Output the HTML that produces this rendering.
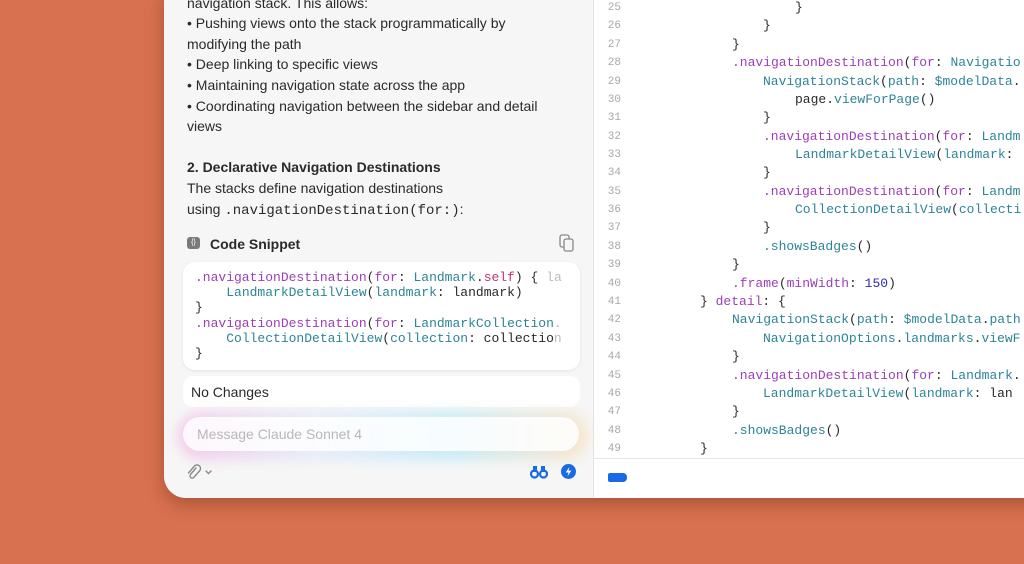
<!DOCTYPE html>
<html><head><meta charset="utf-8"><style>
*{margin:0;padding:0;box-sizing:border-box}
body{width:1024px;height:564px;overflow:hidden;background:#d8714f;font-family:"Liberation Sans",sans-serif;position:relative}
.win{position:absolute;left:164px;top:-20px;width:900px;height:518px;border-radius:22px;background:#fff;overflow:hidden;box-shadow:0 6px 18px rgba(80,30,10,.35)}
.left{position:absolute;left:0;top:0;width:430px;height:100%;background:#f6f6f6;border-right:1px solid #e4e4e4}
.t{position:absolute;left:23px;font-size:14px;color:#2a2a2a;white-space:nowrap}
.mono{font-family:"Liberation Mono",monospace}
.pu{color:#9b3fb8}.te{color:#2c8596}.pk{color:#c2366f}.nv{color:#2d2ab0}.gy{color:#bbb}
.r{position:absolute;left:430px;top:0;right:0;height:100%}
.ln{position:absolute;left:12px;width:24px;text-align:right;font-family:"Liberation Mono",monospace;font-size:11px;color:#a8a8a8}
.cl{position:absolute;font-family:"Liberation Mono",monospace;font-size:13px;color:#2a2a2a;white-space:pre}
</style></head><body>
<div class="win">
 <div class="left">
  <div class="t" style="top:15px">navigation stack. This allows:</div>
  <div class="t" style="top:35px">• Pushing views onto the stack programmatically by</div>
  <div class="t" style="top:56px">modifying the path</div>
  <div class="t" style="top:76px">• Deep linking to specific views</div>
  <div class="t" style="top:97px">• Maintaining navigation state across the app</div>
  <div class="t" style="top:118px">• Coordinating navigation between the sidebar and detail</div>
  <div class="t" style="top:138px">views</div>
  <div class="t" style="top:179px;font-weight:bold">2. Declarative Navigation Destinations</div>
  <div class="t" style="top:200px">The stacks define navigation destinations</div>
  <div class="t" style="top:221px">using <span class="mono">.navigationDestination(for:)</span>:</div>
  <div style="position:absolute;left:23px;top:257px;width:13px;height:12px;background:#7a7a7a;border-radius:3px;color:#fff;font-size:7px;text-align:center;line-height:12px">{}</div>
  <div class="t" style="top:256px;left:46px;font-weight:bold;font-size:14px">Code Snippet</div>
  <svg style="position:absolute;left:395px;top:254px" width="16" height="18" viewBox="0 0 16 18" fill="none" stroke="#888" stroke-width="1.3"><rect x="1" y="1" width="9" height="12" rx="2"/><rect x="5" y="5" width="9" height="12" rx="2" fill="#f6f6f6"/></svg>
  <div style="position:absolute;left:19px;top:282px;width:397px;height:108px;background:#fff;border-radius:12px;box-shadow:0 1px 3px rgba(0,0,0,.08)"></div>
  <div class="cl" style="left:31px;top:290px;line-height:15.2px;font-size:13px;width:380px;overflow:hidden"><span class="pu">.navigationDestination</span>(<span class="pu">for</span>: <span class="te">Landmark</span>.<span class="pk">self</span>) { <span class="gy">la</span>
    <span class="te">LandmarkDetailView</span>(<span class="te">landmark</span>: landmark)
}
<span class="pu">.navigationDestination</span>(<span class="pu">for</span>: <span class="te">LandmarkCollection</span><span class="gy">.</span>
    <span class="te">CollectionDetailView</span>(<span class="te">collection</span>: collectio<span class="gy">n</span>
}</div>
  <div style="position:absolute;left:19px;top:396px;width:397px;height:31px;background:#fff;border-radius:10px"></div>
  <div class="t" style="top:404px;left:27px">No Changes</div>
  <div style="position:absolute;left:14px;top:432px;width:410px;height:48px;border-radius:24px;background:linear-gradient(90deg,rgba(240,150,220,.45),rgba(200,220,255,.35),rgba(140,225,250,.45),rgba(255,210,150,.45));filter:blur(6px)"></div>
  <div style="position:absolute;left:19px;top:437px;width:396px;height:34px;border-radius:17px;background:rgba(255,255,255,.85)"></div>
  <div class="t" style="top:446px;left:33px;color:#b8b8b8">Message Claude Sonnet 4</div>
  <svg style="position:absolute;left:22px;top:484px" width="30" height="16" viewBox="0 0 30 16" fill="none" stroke="#8a8a8a" stroke-width="1.4" stroke-linecap="round"><path d="M10 4L4.5 10.5a2.2 2.2 0 0 0 3.2 3L13.5 7a3.5 3.5 0 0 0-5-5L2.5 9"/><path d="M20 7l2.5 2.5L25 7"/></svg>
  <svg style="position:absolute;left:366px;top:485px" width="18" height="14" viewBox="0 0 18 14"><circle cx="4.5" cy="9" r="3.5" fill="none" stroke="#1a6ae6" stroke-width="2.2"/><circle cx="13.5" cy="9" r="3.5" fill="none" stroke="#1a6ae6" stroke-width="2.2"/><rect x="3" y="1" width="4" height="6" fill="#1a6ae6"/><rect x="11" y="1" width="4" height="6" fill="#1a6ae6"/></svg>
  <svg style="position:absolute;left:397px;top:484px" width="15" height="15" viewBox="0 0 16 16"><circle cx="8" cy="8" r="8" fill="#1a6ae6"/><path d="M9 3L5 9h3l-1 4 4-6H8z" fill="#fff"/></svg>
 </div>
 <div class="r">
  <div style="position:absolute;left:0;right:0;top:478px;border-top:1px solid #e6e6e6"></div>
  <div style="position:absolute;left:14px;top:493px;width:19px;height:9px;background:#1a6ae6;border-radius:2px 4px 4px 2px"></div>
 </div>
</div>
<div style="position:absolute;left:0;top:0">
<div class="ln" style="top:2px;left:597px">25</div><div class="cl" style="left:795px;top:0px">}</div>
<div class="ln" style="top:20px;left:597px">26</div><div class="cl" style="left:763px;top:18px">}</div>
<div class="ln" style="top:39px;left:597px">27</div><div class="cl" style="left:732px;top:37px">}</div>
<div class="ln" style="top:57px;left:597px">28</div><div class="cl" style="left:732px;top:55px"><span class="pu">.navigationDestination</span>(<span class="pu">for</span>: <span class="te">Navigatio</span></div>
<div class="ln" style="top:76px;left:597px">29</div><div class="cl" style="left:763px;top:74px"><span class="te">NavigationStack</span>(<span class="te">path</span>: <span class="te">$modelData</span>.</div>
<div class="ln" style="top:94px;left:597px">30</div><div class="cl" style="left:795px;top:92px">page.<span class="te">viewForPage</span>()</div>
<div class="ln" style="top:112px;left:597px">31</div><div class="cl" style="left:763px;top:110px">}</div>
<div class="ln" style="top:131px;left:597px">32</div><div class="cl" style="left:763px;top:129px"><span class="pu">.navigationDestination</span>(<span class="pu">for</span>: <span class="te">Landm</span></div>
<div class="ln" style="top:149px;left:597px">33</div><div class="cl" style="left:795px;top:147px"><span class="te">LandmarkDetailView</span>(<span class="te">landmark</span>:</div>
<div class="ln" style="top:167px;left:597px">34</div><div class="cl" style="left:763px;top:165px">}</div>
<div class="ln" style="top:186px;left:597px">35</div><div class="cl" style="left:763px;top:184px"><span class="pu">.navigationDestination</span>(<span class="pu">for</span>: <span class="te">Landm</span></div>
<div class="ln" style="top:204px;left:597px">36</div><div class="cl" style="left:795px;top:202px"><span class="te">CollectionDetailView</span>(<span class="te">collecti</span></div>
<div class="ln" style="top:222px;left:597px">37</div><div class="cl" style="left:763px;top:220px">}</div>
<div class="ln" style="top:241px;left:597px">38</div><div class="cl" style="left:763px;top:239px"><span class="te">.showsBadges</span>()</div>
<div class="ln" style="top:259px;left:597px">39</div><div class="cl" style="left:732px;top:257px">}</div>
<div class="ln" style="top:278px;left:597px">40</div><div class="cl" style="left:732px;top:276px"><span class="pu">.frame</span>(<span class="pu">minWidth</span>: <span class="nv">150</span>)</div>
<div class="ln" style="top:296px;left:597px">41</div><div class="cl" style="left:700px;top:294px">} <span class="pu">detail</span>: {</div>
<div class="ln" style="top:314px;left:597px">42</div><div class="cl" style="left:732px;top:312px"><span class="te">NavigationStack</span>(<span class="te">path</span>: <span class="te">$modelData</span>.<span class="te">path</span></div>
<div class="ln" style="top:333px;left:597px">43</div><div class="cl" style="left:763px;top:331px"><span class="te">NavigationOptions</span>.<span class="te">landmarks</span>.<span class="te">viewF</span></div>
<div class="ln" style="top:351px;left:597px">44</div><div class="cl" style="left:732px;top:349px">}</div>
<div class="ln" style="top:370px;left:597px">45</div><div class="cl" style="left:732px;top:368px"><span class="pu">.navigationDestination</span>(<span class="pu">for</span>: <span class="te">Landmark</span>.</div>
<div class="ln" style="top:388px;left:597px">46</div><div class="cl" style="left:763px;top:386px"><span class="te">LandmarkDetailView</span>(<span class="te">landmark</span>: lan</div>
<div class="ln" style="top:406px;left:597px">47</div><div class="cl" style="left:732px;top:404px">}</div>
<div class="ln" style="top:425px;left:597px">48</div><div class="cl" style="left:732px;top:423px"><span class="te">.showsBadges</span>()</div>
<div class="ln" style="top:443px;left:597px">49</div><div class="cl" style="left:700px;top:441px">}</div>
</div>
</body></html>
